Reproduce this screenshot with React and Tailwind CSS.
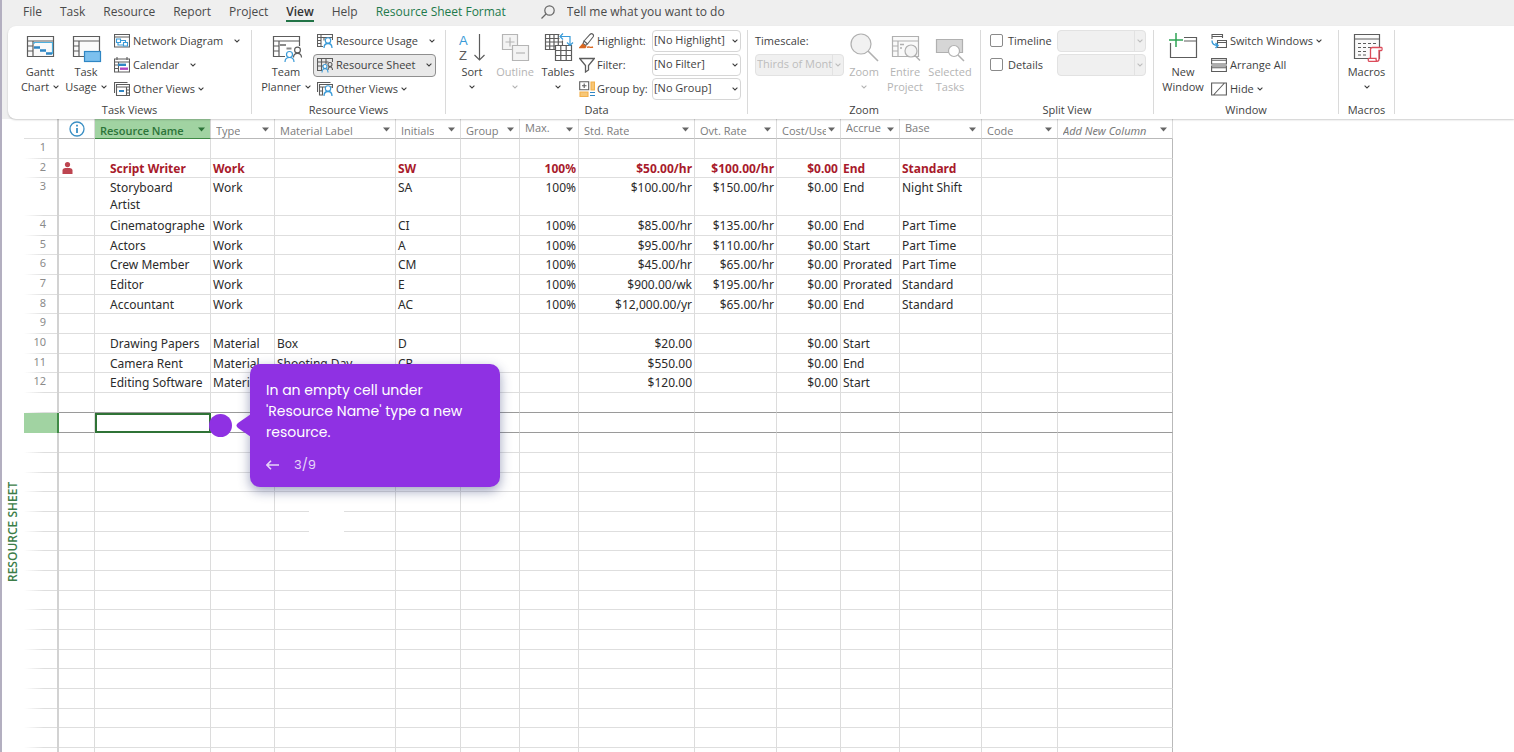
import { clsx } from "clsx";

const tabs = ["File", "Task", "Resource", "Report", "Project", "View", "Help", "Resource Sheet Format"];

const columns = [
    { key: "name", label: "Resource Name", width: "w-[116px]" },
    { key: "type", label: "Type", width: "w-[64px]" },
    { key: "material", label: "Material Label", width: "w-[121px]" },
    { key: "initials", label: "Initials", width: "w-[65px]" },
    { key: "group", label: "Group", width: "w-[59px]" },
    { key: "max", label: "Max.", width: "w-[59px]", right: true, raised: true },
    { key: "std", label: "Std. Rate", width: "w-[116px]", right: true },
    { key: "ovt", label: "Ovt. Rate", width: "w-[82px]", right: true },
    { key: "cost", label: "Cost/Use", width: "w-[64px]", right: true },
    { key: "accrue", label: "Accrue", width: "w-[59px]", raised: true },
    { key: "base", label: "Base", width: "w-[82px]", raised: true },
    { key: "code", label: "Code", width: "w-[76px]" },
    { key: "add", label: "Add New Column", width: "w-[115px]" },
];

const resources = [
    {},
    { name: "Script Writer", type: "Work", initials: "SW", max: "100%", std: "$50.00/hr", ovt: "$100.00/hr", cost: "$0.00", accrue: "End", base: "Standard", over: true },
    { name: "Storyboard\nArtist", type: "Work", initials: "SA", max: "100%", std: "$100.00/hr", ovt: "$150.00/hr", cost: "$0.00", accrue: "End", base: "Night Shift", tall: true },
    { name: "Cinematographe", type: "Work", initials: "CI", max: "100%", std: "$85.00/hr", ovt: "$135.00/hr", cost: "$0.00", accrue: "End", base: "Part Time" },
    { name: "Actors", type: "Work", initials: "A", max: "100%", std: "$95.00/hr", ovt: "$110.00/hr", cost: "$0.00", accrue: "Start", base: "Part Time" },
    { name: "Crew Member", type: "Work", initials: "CM", max: "100%", std: "$45.00/hr", ovt: "$65.00/hr", cost: "$0.00", accrue: "Prorated", base: "Part Time" },
    { name: "Editor", type: "Work", initials: "E", max: "100%", std: "$900.00/wk", ovt: "$195.00/hr", cost: "$0.00", accrue: "Prorated", base: "Standard" },
    { name: "Accountant", type: "Work", initials: "AC", max: "100%", std: "$12,000.00/yr", ovt: "$65.00/hr", cost: "$0.00", accrue: "End", base: "Standard" },
    {},
    { name: "Drawing Papers", type: "Material", material: "Box", initials: "D", std: "$20.00", cost: "$0.00", accrue: "Start" },
    { name: "Camera Rent", type: "Material", material: "Shooting Day", initials: "CR", std: "$550.00", cost: "$0.00", accrue: "End" },
    { name: "Editing Software", type: "Material", std: "$120.00", cost: "$0.00", accrue: "Start" },
    {},
    { active: true },
];

const rows = [...resources, ...Array.from({ length: 18 }, () => ({}))];

const DARK = "#5c5c5c";
const BLUE = "#2f86c4";

function Chevron({ className }) {
    return (
        <svg className={clsx("h-1 w-1.5 shrink-0", className)} viewBox="0 0 6 4" fill="none" stroke="currentColor" strokeWidth="1.1">
            <path d="M0.6 0.700 3 2.900 5.400 0.700" />
        </svg>
    );
}

/* large ribbon icons, 30x28 */

function Big({ children, stroke = DARK }) {
    return (
        <svg className="h-7 w-[30px] shrink-0 overflow-visible" viewBox="0 0 30 28" fill="none" stroke={stroke} strokeWidth="1.2">
            {children}
        </svg>
    );
}

function SheetFrame() {
    return <path fill="#fafafa" d="M2.5 2.5h26v20h-26zM2.5 7h26M8 7v15.500M2.500 12h5.500M2.500 17h5.500" />;
}

const GanttIcon = () => (
    <Big>
        <SheetFrame />
        <path stroke="#4db0df" d="M9 10V8.500h18.500V20" />
        <path stroke={BLUE} strokeWidth="2.600" d="M9 13.500h6M15 16.500h6M21 19.500h6" />
    </Big>
);

const UsageIcon = () => (
    <Big>
        <SheetFrame />
        <rect x="13.500" y="17.500" width="16" height="10" fill="#7cc0ee" stroke={BLUE} />
    </Big>
);

const PlannerIcon = () => (
    <Big>
        <path d="M14 22.500H2.500v-20h26V12M2.500 7h26M8 7v15.500M2.500 12h5.500M2.500 17h5.500" />
        <path strokeWidth="2" stroke="#8a8a8a" d="M9 11h6M15.500 14.500h5" />
        <circle cx="26.500" cy="16" r="2.900" fill="#fff" />
        <path d="M22.500 23.500c0-5.500 8-5.500 8 0" />
        <circle cx="18.500" cy="20.500" r="3" fill="#fff" stroke="#3a9bd8" />
        <path stroke="#3a9bd8" d="M14 28c0-6 9-6 9 0" />
    </Big>
);

const SortIcon = () => (
    <Big>
        <text x="2" y="11" fontSize="13" fontFamily="Liberation Sans, sans-serif" fill="#3a9bd8" stroke="none">A</text>
        <text x="2" y="26" fontSize="13" fontFamily="Liberation Sans, sans-serif" fill={DARK} stroke="none">Z</text>
        <path d="M22.500 0v26M17.500 21l5 5 5-5" />
    </Big>
);

const OutlineIcon = () => (
    <Big stroke="#b5b5b5">
        <path fill="#f3f3f3" d="M2.500 0.500h15v15h-15z" />
        <path d="M10 3.500v9M5.500 8h9" />
        <path fill="#f3f3f3" d="M12.500 11.500h16v15h-16z" />
        <path d="M16 19h9" />
    </Big>
);

const TablesIcon = () => (
    <Big>
        <path d="M2.500 0.500h17v15h-17zM2.500 4.500h17M2.500 8h17M2.500 12h17M6.700 0.500v15M11 0.500v15M15.300 0.500v15" />
        <path fill="#fff" d="M12.500 11.500h16v15h-16z" />
        <path d="M12.500 16.500h16M12.500 21.500h16M17.800 11.500v15M23.200 11.500v15" />
        <path stroke="#fff" fill="#fff" d="M17 0h13v10.500H21V6h-4z" />
        <path stroke="#3a9bd8" d="M20 -.5 17 2.500l3 3M17 2.500h10v9M24 8.500l3 3 3-3" />
    </Big>
);

const ZoomIcon = () => (
    <Big stroke="#b0b0b0">
        <circle cx="12" cy="10" r="10" fill="#f1f1f1" />
        <path strokeWidth="1.600" d="m19 17 10 10" />
    </Big>
);

const EntireIcon = () => (
    <Big stroke="#b0b0b0">
        <SheetFrame />
        <path strokeWidth="1.600" d="M10 10.500h4M10 14h2" />
        <circle cx="21" cy="17" r="6" fill="#f4f4f4" />
        <path strokeWidth="1.500" d="m25 21.500 5 5" />
    </Big>
);

const SelectedIcon = () => (
    <Big stroke="#b0b0b0">
        <path fill="#d6d6d6" d="M1.500 5.500h26v13h-26z" />
        <circle cx="19" cy="17" r="5.500" fill="#fff" />
        <path strokeWidth="1.500" d="m23 21 6 6" />
    </Big>
);

const NewWindowIcon = () => (
    <Big>
        <path d="M2.500 9v14.500h26v-20H16M16 7h12.500" />
        <path stroke="#2fa455" strokeWidth="1.500" d="M8 -1v14M1 6h14" />
    </Big>
);

const MacrosIcon = () => (
    <Big>
        <path fill="#fafafa" d="M2.500 0.500h25v24h-25zM2.500 5h25" />
        <path strokeDasharray="3 2" d="M6 9.500h3M11 9.500h14M6 13.500h3M11 13.500h8M6 17.500h3M11 17.500h4M6 21h3M11 21h4" />
        <path stroke="#dc4b5a" strokeWidth="1.300" fill="#fff" d="M18.500 24V15.500c0-1.500.6-2 2-2h9c.8 0 .8 3 0 3H27V25c0 1.600-.6 2.400-2 2.400h-8c-1 0-1-3 0-3h7c0 1.500.3 3 1.500 3" />
    </Big>
);

/* small ribbon icons, 16x16 */

function Small({ children, stroke = DARK }) {
    return (
        <svg className="size-4 shrink-0" viewBox="0 0 16 16" fill="none" stroke={stroke} strokeWidth="1.100">
            {children}
        </svg>
    );
}

const PersonMark = () => (
    <>
        <circle cx="11" cy="7.500" r="2.700" fill="#fff" stroke="#3a9bd8" />
        <path stroke="#3a9bd8" strokeWidth="1.300" d="M7 15c0-6 8-6 8 0" />
    </>
);

const NetworkIcon = () => (
    <Small>
        <path d="M0.500 14V1.500h15V14zM0.500 4h15" />
        <path stroke="#3a9bd8" d="M2.500 6h4v3.500h-4zM9.500 9.500h4V13h-4zM4 9.500V12h5.500M6.500 7.500h5v2" />
    </Small>
);

const CalendarIcon = () => (
    <Small>
        <path d="M0.500 2h15v13h-15zM0.500 5h15M4.500 5v10M3 0v3M13 0v3M0.500 8h4M0.500 11.500h4" />
        <path stroke={BLUE} strokeWidth="2.400" d="M4 7.800h8" />
        <path stroke="#b146c2" strokeWidth="2.400" d="M6 11.700h8" />
    </Small>
);

const OtherTasksIcon = () => (
    <Small>
        <path d="M0.500 12V1.500h13M2.500 3.500h13v11h-13zM2.500 6h13M12.500 6v8.500M12.500 9h3M12.500 12h3" />
        <path stroke={BLUE} strokeWidth="2" d="M5 10h5" />
    </Small>
);

const ResourceUsageIcon = () => (
    <Small>
        <path d="M6 13.500H0.500v-12h15V7M0.500 4.500h15M4 1.500v12M0.500 7.500H4M0.500 10.500H4M7 4.500v3" />
        <PersonMark />
    </Small>
);

const ResourceSheetIcon = () => (
    <Small>
        <path d="M5 13.500H0.500v-12h15V5M0.500 5h11M0.500 9h6M4.500 1.500v12M9 1.500V7" />
        <circle cx="13" cy="7.500" r="2" />
        <path d="M11 13c0-4 4.500-4 4.500 0" />
        <circle cx="8" cy="9.500" r="2" fill="#fff" stroke="#3a9bd8" />
        <path stroke="#3a9bd8" d="M5 15.500c0-5 6-5 6 0" />
    </Small>
);

const OtherResourcesIcon = () => (
    <Small>
        <path d="M0.500 11V1.500h13M6 14H2.500V3.500h13V7M2.500 6h13M5.500 6v8M2.500 10h3" />
        <PersonMark />
    </Small>
);

const HighlightIcon = () => (
    <Small>
        <path d="m5 8 6-6.500c2-2 4.500.5 3 2.500L8.500 11M5 8l3.500 3-2 1.500-2.500-2z" />
        <path stroke="#d9661f" strokeWidth="1.500" fill="#d9661f" d="M4 11 1 14.500h5l1-1.500" />
        <path stroke="#d9661f" strokeWidth="1.400" d="M8 14.500c2-1.500 3 .8 6-.5" />
    </Small>
);

const FilterIcon = () => (
    <Small>
        <path strokeWidth="1.300" d="M0.700 1.500h14.600L9.500 8.500V13l-3 2V8.500z" />
    </Small>
);

const GroupByIcon = () => (
    <Small>
        <path d="M0.700 0.700h9v8h-9z" />
        <path d="M5.200 2.500v4.500M3 4.700h4.500" />
        <path stroke="#f2b04a" fill="#f7c777" d="M12 1h3.500v8H12zM1 11h8v4.500H1z" />
        <path stroke={BLUE} d="M11 11.500h5M11 14.500h5" />
    </Small>
);

const SwitchIcon = () => (
    <Small>
        <path d="M1 6V1.500h10.500V5M1 3.500h10.500M6.500 7.500h9v7h-9zM6.500 9.500h9" />
        <path stroke="#3a9bd8" strokeWidth="1.400" d="M1 7.500c0 4 2 5 6 5M4.500 10 7 12.500 4.500 15" />
    </Small>
);

const ArrangeIcon = () => (
    <Small>
        <path d="M0.600 1.500h14.800v5.500H0.600zM0.600 9h14.800v5.500H0.600zM0.600 3.200h14.800M0.600 10.700h14.800" />
    </Small>
);

const HideIcon = () => (
    <Small>
        <path d="M0.600 2h14.800v12H0.600zM2.500 14l11-12" />
    </Small>
);

/* ribbon parts */

function Group({ label, className, bodyClassName, children }) {
    return (
        <>
            <section aria-label={label} className={clsx("flex shrink-0 flex-col pt-[3px]", className)}>
                <div className={clsx("flex h-[72px]", bodyClassName)}>{children}</div>
                <div className="text-center leading-[18px]">{label}</div>
            </section>
            <span className="mt-1 h-[84px] w-px shrink-0 bg-[#dadada]" />
        </>
    );
}

function LargeButton({ icon, lines, chevron, className, disabled }) {
    return (
        <button disabled={disabled} className={clsx("flex flex-col items-center pt-[5px] leading-[15px]", disabled && "text-[#b4b4b4]", className)}>
            {icon}
            <span className="mt-0.5">{lines[0]}</span>
            <span className="flex h-[15px] items-center gap-1 whitespace-nowrap">
                {lines[1]}
                {chevron && <Chevron />}
            </span>
        </button>
    );
}

function SmallButton({ icon, label, chevron, wide, selected }) {
    return (
        <div className="flex h-6 items-center">
            <button
                className={clsx(
                    "flex h-[23px] items-center gap-[3px] rounded border px-[3px] whitespace-nowrap",
                    selected ? "border-[#8f8f8f] bg-[#e9e9e9]" : "border-transparent"
                )}
            >
                {icon}
                <span>{label}</span>
                {chevron && <Chevron className={wide ? "ml-2" : ""} />}
            </button>
        </div>
    );
}

function Dropdown({ id, label, value, disabled }) {
    return (
        <div className="flex h-6 items-center">
            <div className="relative h-[22px] w-[89px]">
                <select
                    id={id}
                    aria-label={label}
                    disabled={disabled}
                    defaultValue={value}
                    className={clsx(
                        "h-full w-full appearance-none rounded border pb-0.5 pl-px opacity-100",
                        disabled ? "border-[#e2e2e2] bg-[#f0f0f0] text-[#bdbdbd]" : "border-[#d6d6d6] bg-white"
                    )}
                >
                    <option>{value}</option>
                </select>
                <span
                    className={clsx(
                        "pointer-events-none absolute inset-y-px right-px flex w-[11px] items-center justify-center",
                        disabled && "border-l border-[#e2e2e2] text-[#bdbdbd]"
                    )}
                >
                    <Chevron />
                </span>
            </div>
        </div>
    );
}

function FieldLabel({ icon, id, children }) {
    return (
        <label htmlFor={id} className="flex h-6 items-center gap-0.5 whitespace-nowrap">
            {icon}
            {children}
        </label>
    );
}

function CheckRow({ label }) {
    return (
        <label className="flex h-6 items-center gap-[5px]">
            <input type="checkbox" className="mb-0.5 size-[13px] appearance-none rounded-[2px] border border-[#8a8a8a] bg-white" />
            {label}
        </label>
    );
}

function Ribbon() {
    return (
        <div className="relative z-20 ml-1.5 flex h-[93px] shrink-0 rounded-l-lg bg-white text-[11px] text-[#3f3f3f] shadow-[0_1px_2px_rgba(0,0,0,0.2)]">
            <Group label="Task Views" className="w-[243px]" bodyClassName="pl-2.5">
                <LargeButton icon={<GanttIcon />} lines={["Gantt", "Chart"]} chevron className="w-11" />
                <LargeButton icon={<UsageIcon />} lines={["Task", "Usage"]} chevron className="w-12" />
                <div>
                    <SmallButton icon={<NetworkIcon />} label="Network Diagram" chevron wide />
                    <SmallButton icon={<CalendarIcon />} label="Calendar" chevron wide />
                    <SmallButton icon={<OtherTasksIcon />} label="Other Views" chevron />
                </div>
            </Group>
            <Group label="Resource Views" className="w-[193px]" bodyClassName="pl-2">
                <LargeButton icon={<PlannerIcon />} lines={["Team", "Planner"]} chevron className="w-[52px]" />
                <div className="ml-px">
                    <SmallButton icon={<ResourceUsageIcon />} label="Resource Usage" chevron wide />
                    <SmallButton icon={<ResourceSheetIcon />} label="Resource Sheet" chevron wide selected />
                    <SmallButton icon={<OtherResourcesIcon />} label="Other Views" chevron />
                </div>
            </Group>
            <Group label="Data" className="w-[301px]" bodyClassName="pl-2">
                <LargeButton icon={<SortIcon />} lines={["Sort"]} chevron className="w-9" />
                <LargeButton icon={<OutlineIcon />} lines={["Outline"]} chevron className="w-[50px]" disabled />
                <LargeButton icon={<TablesIcon />} lines={["Tables"]} chevron className="w-9" />
                <div className="ml-[3px] w-[73px]">
                    <FieldLabel id="highlight" icon={<HighlightIcon />}>Highlight:</FieldLabel>
                    <FieldLabel id="filter" icon={<FilterIcon />}>Filter:</FieldLabel>
                    <FieldLabel id="group-by" icon={<GroupByIcon />}>Group by:</FieldLabel>
                </div>
                <div>
                    <Dropdown id="highlight" value="[No Highlight]" />
                    <Dropdown id="filter" value="[No Filter]" />
                    <Dropdown id="group-by" value="[No Group]" />
                </div>
            </Group>
            <Group label="Zoom" className="w-[232px]" bodyClassName="pl-[7px]">
                <div>
                    <FieldLabel id="timescale">Timescale:</FieldLabel>
                    <Dropdown id="timescale" value="Thirds of Mont" disabled />
                </div>
                <LargeButton icon={<ZoomIcon />} lines={["Zoom"]} chevron className="w-10" disabled />
                <LargeButton icon={<EntireIcon />} lines={["Entire", "Project"]} className="w-[42px]" disabled />
                <LargeButton icon={<SelectedIcon />} lines={["Selected", "Tasks"]} className="w-12" disabled />
            </Group>
            <Group label="Split View" className="w-[172px]" bodyClassName="pl-[9px]">
                <div className="w-[67px]">
                    <CheckRow label="Timeline" />
                    <CheckRow label="Details" />
                </div>
                <div>
                    <Dropdown label="Timeline view" value="" disabled />
                    <Dropdown label="Details view" value="" disabled />
                </div>
            </Group>
            <Group label="Window" className="w-[184px]" bodyClassName="pl-[5px]">
                <LargeButton icon={<NewWindowIcon />} lines={["New", "Window"]} className="w-12" />
                <div>
                    <SmallButton icon={<SwitchIcon />} label="Switch Windows" chevron />
                    <SmallButton icon={<ArrangeIcon />} label="Arrange All" />
                    <SmallButton icon={<HideIcon />} label="Hide" chevron />
                </div>
            </Group>
            <Group label="Macros" className="w-[55px]">
                <LargeButton icon={<MacrosIcon />} lines={["Macros"]} chevron className="w-full" />
            </Group>
        </div>
    );
}

function TabBar() {
    return (
        <nav className="flex h-[26px] shrink-0 items-start pl-3 text-[12px] text-[#4a4a4a]">
            {tabs.map((tab) => (
                <a
                    key={tab}
                    href="#"
                    className={clsx(
                        "mx-[9px] h-[22px] border-b-2 leading-[23px] whitespace-nowrap",
                        tab === "View" ? "border-[#217346] font-semibold text-[#333]" : "border-transparent",
                        tab === "Resource Sheet Format" && "text-[#1e7a4c]"
                    )}
                >
                    {tab}
                </a>
            ))}
            <label className="ml-[26px] flex h-[23px] items-center gap-3">
                <svg className="size-[14px]" viewBox="0 0 14 14" fill="none" stroke="#666" strokeWidth="1.200">
                    <circle cx="8.500" cy="5.500" r="4.700" />
                    <path d="M5 9 0.500 13.500" />
                </svg>
                <input className="w-44 bg-transparent placeholder:text-[#4a4a4a] placeholder:opacity-100" placeholder="Tell me what you want to do" />
            </label>
        </nav>
    );
}

function Coach() {
    return (
        <>
            <span className="absolute top-px left-[114px] z-10 size-[23px] rounded-full bg-[#8f31e3]" />
            <div className="absolute -top-[49px] left-[155px] z-10 w-[250px] rounded-[10px] bg-[#8f31e3] px-4 pt-4 pb-3 font-[Poppins,Inter,sans-serif] text-[14px] leading-[21px] text-white shadow-[0_4px_12px_rgba(40,50,110,0.45)]">
                <svg className="absolute top-[50px] -left-[14px] h-[23px] w-[15px]" viewBox="0 0 15 23" fill="#8f31e3">
                    <path d="M15 0v23L2 14Q-1 11.500 2 9z" />
                </svg>
                <p className="whitespace-normal">In an empty cell under 'Resource Name' type a new resource.</p>
                <div className="mt-[11px] flex items-center gap-[15px] text-[13px] text-[#e6d5f8]">
                    <button aria-label="Back">
                        <svg className="h-[10px] w-[13px]" viewBox="0 0 13 10" fill="none" stroke="currentColor" strokeWidth="1.600">
                            <path d="M13 5H1M5 0.800.900 5 5 9.200" />
                        </svg>
                    </button>
                    <span>3/9</span>
                </div>
            </div>
            {/* clear spot in the grid under the bubble */}
            <span className="absolute top-[96px] left-[214px] h-7 w-[35px] bg-white" />
        </>
    );
}

function HeaderCell({ column }) {
    const isName = column.key === "name";
    return (
        <th
            scope="col"
            className={clsx(
                "border-r border-b p-0 text-left align-top",
                isName ? "border-r-[#d4d4d4] border-b-[#3f8a45] bg-[#a1d3a2] font-semibold text-[#2c7439]" : "border-r-[#dcdcdc] border-b-[#b9b9b9] font-normal text-[#7b7b7b]",
                column.key === "add" && "font-['Noto_Sans',sans-serif] italic"
            )}
        >
            <div className={clsx("flex h-[19px] items-center justify-between gap-0.5 overflow-hidden px-[5px]", column.raised ? "pb-px" : "pt-[5px]")}>
                <span className="overflow-hidden whitespace-nowrap">{column.label}</span>
                <svg className={clsx("h-[5px] w-[7px] shrink-0", isName ? "text-[#2c7439]" : "text-[#666]", column.raised ? "mt-[3px]" : "mb-[3px]")} viewBox="0 0 7 5" fill="currentColor">
                    <path d="M0 .5h7L3.500 4.500z" />
                </svg>
            </div>
        </th>
    );
}

function SheetRow({ row, number }) {
    const edge = row.active || number === 13 ? "border-b-[#9a9a9a]" : "border-b-[#dedede]";
    return (
        <tr className={clsx(row.tall ? "h-[38px]" : "h-5", row.over ? "font-bold text-[#a81a2b]" : "text-[#2b2b2b]")}>
            <th
                scope="row"
                className={clsx(
                    "border-r-2 p-0 pr-[11px] text-right align-top text-[11px] leading-4 font-normal text-[#8b8b8b]",
                    row.active
                        ? "border-r-[#3f8a45] bg-[#a1d3a2]"
                        : "border-r-[#d2d2d2] bg-[linear-gradient(to_right,transparent,#dedede_60%)] bg-[length:100%_1px] bg-bottom bg-no-repeat"
                )}
            >
                {number <= 12 ? number : ""}
            </th>
            <td className={clsx("border-r border-b border-r-[#dcdcdc] p-0 align-top", edge)}>
                {row.over && (
                    <svg className="mt-[3px] ml-[3px] h-3 w-[11px]" viewBox="0 0 11 12" fill="#bd4550" aria-label="Overallocated">
                        <circle cx="5.500" cy="2.600" r="2.600" />
                        <path d="M0.500 12V8.500C.5 6.500 2 6 5.500 6s5 .5 5 2.500V12z" />
                    </svg>
                )}
            </td>
            {columns.map((column) =>
                row.active && column.key === "name" ? (
                    <td key={column.key} className="relative p-0">
                        <input aria-label="Resource Name" className="block h-5 w-full border-2 border-[#2f7336] bg-white px-3.5 outline-none" />
                        <Coach />
                    </td>
                ) : (
                    <td
                        key={column.key}
                        className={clsx(
                            "overflow-hidden border-r border-b p-0 pt-px align-top leading-[17px] whitespace-pre",
                            edge,
                            column.key === "add" ? "border-r-[#b9b9b9]" : "border-r-[#dcdcdc]",
                            column.key === "name" ? "pl-[15px]" : "pl-0.5",
                            column.right && "pr-0.5 text-right"
                        )}
                    >
                        {row[column.key]}
                    </td>
                )
            )}
        </tr>
    );
}

function Sheet() {
    return (
        <div className="flex min-h-0 flex-1 overflow-hidden bg-white">
            <div className="flex w-[22px] shrink-0 justify-center pt-[360px] font-['Open_Sans',sans-serif] text-[12px] font-semibold text-[#3c7d48]">
                <h2 className="h-[103px] rotate-180 leading-[14px] whitespace-nowrap [writing-mode:vertical-rl]">RESOURCE SHEET</h2>
            </div>
            <div className="min-w-0 flex-1">
                <table className="w-[1149px] table-fixed border-separate border-spacing-0 font-['Noto_Sans',sans-serif] text-[12px]">
                    <colgroup>
                        <col className="w-[35px]" />
                        <col className="w-[36px]" />
                        {columns.map((column) => (
                            <col key={column.key} className={column.width} />
                        ))}
                    </colgroup>
                    <thead className="font-['Open_Sans',sans-serif] text-[11px] leading-[14px]">
                        <tr className="h-5">
                            <td className="border-r-2 border-b border-r-[#d2d2d2] border-b-[#dedede] p-0" />
                            <th scope="col" aria-label="Indicators" className="border-r border-b border-r-[#dcdcdc] border-b-[#b9b9b9] p-0">
                                <svg className="mx-auto size-4" viewBox="0 0 16 16" fill="none" stroke="#3a8fc4" strokeWidth="1.300">
                                    <circle cx="8" cy="8" r="7" />
                                    <path strokeWidth="1.800" d="M8 7v5M8 3.800v1.800" />
                                </svg>
                            </th>
                            {columns.map((column) => (
                                <HeaderCell key={column.key} column={column} />
                            ))}
                        </tr>
                    </thead>
                    <tbody className="[&>tr:nth-child(3n+2)]:h-[19px]">
                        {rows.map((row, i) => (
                            <SheetRow key={i} row={row} number={i + 1} />
                        ))}
                    </tbody>
                </table>
            </div>
        </div>
    );
}

export default function App() {
    return (
        <div className="flex h-screen flex-col overflow-hidden border-l-2 border-[#b3afc0] bg-[#efefef] font-['Open_Sans',sans-serif]">
            <TabBar />
            <Ribbon />
            <Sheet />
        </div>
    );
}
